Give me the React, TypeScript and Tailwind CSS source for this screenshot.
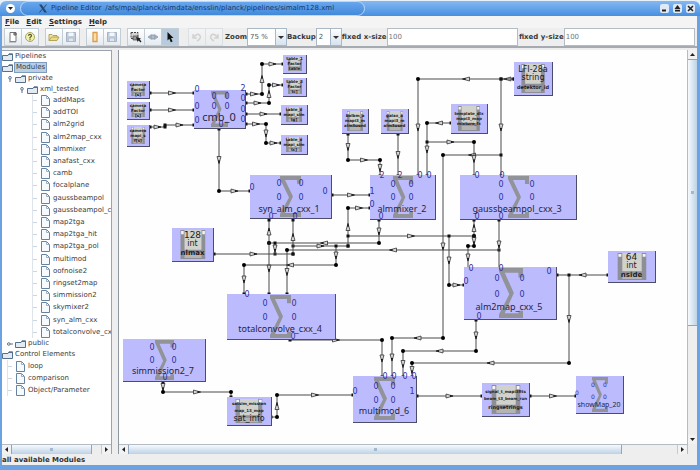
import { useState } from 'react';
import type { ReactNode } from 'react';

type Point = [number, number];

interface Port {
  x: number;
  y: number;
  text?: string;
}

interface ModuleNode {
  name: string;
  x: number;
  y: number;
  w: number;
  h: number;
  sigma: [number, number, number, number];
  label: Point;
  size?: 'small' | 'large';
  ports: Port[];
}

interface DataNode {
  x: number;
  y: number;
  w: number;
  h: number;
  kind: 'tiny' | 'value';
  lines: string[];
}

const ORIGIN = { x: 119, y: 50 };

const fileNames = [
  'addMaps', 'addTOI', 'alm2grid', 'alm2map_cxx', 'almmixer', 'anafast_cxx', 'camb',
  'focalplane', 'gaussbeampol', 'gaussbeampol_c', 'map2tga', 'map2tga_hit', 'map2tga_pol',
  'multimod', 'oofnoise2', 'ringset2map', 'simmission2', 'skymixer2', 'syn_alm_cxx',
  'totalconvolve_cx',
];

const modules: ModuleNode[] = [
  {
    name: 'cmb_0', x: 194, y: 90, w: 52, h: 39, sigma: [211, 91, 17, 36], label: [219, 116], size: 'large',
    ports: [
      { x: 197, y: 90 }, { x: 197, y: 107 }, { x: 197, y: 121 },
      { x: 243, y: 89, text: '2' }, { x: 243, y: 99 }, { x: 243, y: 110 }, { x: 243, y: 120 },
      { x: 214, y: 97 }, { x: 227, y: 97 }, { x: 214, y: 107 }, { x: 227, y: 107 }, { x: 221, y: 125 },
    ],
  },
  {
    name: 'syn_alm_cxx_1', x: 250, y: 175, w: 82, h: 44, sigma: [280, 176, 21, 41], label: [289, 208],
    ports: [
      { x: 252, y: 188 }, { x: 325, y: 192 }, { x: 279, y: 184 }, { x: 301, y: 184 },
      { x: 279, y: 198 }, { x: 301, y: 198 }, { x: 271, y: 217 }, { x: 295, y: 217 },
    ],
  },
  {
    name: 'almmixer_2', x: 370, y: 175, w: 66, h: 45, sigma: [393, 176, 20, 42], label: [402, 208],
    ports: [
      { x: 372, y: 192, text: '1' }, { x: 372, y: 205 }, { x: 382, y: 176, text: '2' },
      { x: 400, y: 176, text: '2' }, { x: 420, y: 176 }, { x: 429, y: 176 }, { x: 393, y: 185 },
      { x: 411, y: 185 }, { x: 393, y: 198 }, { x: 411, y: 198 }, { x: 381, y: 217 },
    ],
  },
  {
    name: 'gaussbeampol_cxx_3', x: 460, y: 175, w: 117, h: 45, sigma: [508, 176, 21, 42], label: [517, 208],
    ports: [
      { x: 477, y: 176 }, { x: 502, y: 176 }, { x: 501, y: 185 }, { x: 532, y: 185 },
      { x: 501, y: 198 }, { x: 532, y: 198 }, { x: 477, y: 217 }, { x: 501, y: 217 },
    ],
  },
  {
    name: 'totalconvolve_cxx_4', x: 227, y: 294, w: 109, h: 46, sigma: [270, 295, 21, 43], label: [280, 328],
    ports: [
      { x: 247, y: 295 }, { x: 265, y: 304 }, { x: 294, y: 304 }, { x: 265, y: 318 },
      { x: 294, y: 318 }, { x: 293, y: 337 },
    ],
  },
  {
    name: 'alm2map_cxx_5', x: 464, y: 267, w: 93, h: 53, sigma: [499, 268, 24, 50], label: [509, 306],
    ports: [
      { x: 471, y: 269 }, { x: 501, y: 269 }, { x: 466, y: 282 }, { x: 549, y: 272 },
      { x: 497, y: 279 }, { x: 522, y: 279 }, { x: 497, y: 295 }, { x: 522, y: 295 }, { x: 479, y: 317 },
    ],
  },
  {
    name: 'simmission2_7', x: 123, y: 339, w: 83, h: 43, sigma: [155, 340, 19, 40], label: [163, 370],
    ports: [
      { x: 152, y: 348 }, { x: 174, y: 348 }, { x: 152, y: 361 }, { x: 174, y: 361 }, { x: 165, y: 378 },
    ],
  },
  {
    name: 'multimod_6', x: 353, y: 376, w: 64, h: 47, sigma: [374, 377, 21, 43], label: [384, 410],
    ports: [
      { x: 355, y: 392 }, { x: 412, y: 392, text: '1' }, { x: 385, y: 377 }, { x: 394, y: 377 },
      { x: 405, y: 377 }, { x: 414, y: 377 }, { x: 376, y: 387 }, { x: 393, y: 387 },
      { x: 376, y: 401 }, { x: 393, y: 401 },
    ],
  },
  {
    name: 'showMap_20', x: 576, y: 376, w: 48, h: 38, sigma: [592, 377, 16, 35], label: [599, 404], size: 'small',
    ports: [
      { x: 577, y: 393 }, { x: 593, y: 385 }, { x: 605, y: 385 }, { x: 593, y: 397 }, { x: 605, y: 397 },
    ],
  },
];

const dataNodes: DataNode[] = [
  { x: 127, y: 81, w: 23, h: 18, kind: 'tiny', lines: ['camera', 'Factor', '[s]'] },
  { x: 127, y: 102, w: 23, h: 18, kind: 'tiny', lines: ['camera', 'Factor', '[s]'] },
  { x: 127, y: 125, w: 23, h: 22, kind: 'tiny', lines: ['camera', 'mapi_s', 'f[s]'] },
  { x: 283, y: 55, w: 24, h: 19, kind: 'tiny', lines: ['table_1', 'Factor', 'table'] },
  { x: 283, y: 78, w: 24, h: 19, kind: 'tiny', lines: ['table_8', 'Factor', 'tc]'] },
  { x: 281, y: 105, w: 27, h: 20, kind: 'tiny', lines: ['table_8', 'mapi_sim', 'tg]'] },
  { x: 281, y: 135, w: 27, h: 20, kind: 'tiny', lines: ['table_6', 'mapi_sim', 'tc]'] },
  { x: 342, y: 109, w: 27, h: 25, kind: 'tiny', lines: ['bolbm_a', 'mapi3_m', 'alm3used'] },
  { x: 381, y: 109, w: 28, h: 25, kind: 'tiny', lines: ['galax_a', 'mapi3_m', 'alm3used'] },
  { x: 451, y: 104, w: 37, h: 30, kind: 'tiny', lines: ['template_dlx', 'mapi3_map', 'mixture_fx'] },
  { x: 514, y: 62, w: 39, h: 34, kind: 'value', lines: ['LFI-28a', 'string', 'detektor_id'] },
  { x: 172, y: 228, w: 42, h: 34, kind: 'value', lines: ['128', 'int', 'nlmax'] },
  { x: 608, y: 251, w: 48, h: 32, kind: 'value', lines: ['64', 'int', 'nside'] },
  { x: 227, y: 397, w: 45, h: 29, kind: 'tiny', lines: ['satsim_mission', 'map_13_map', 'sat_info'] },
  { x: 482, y: 383, w: 48, h: 34, kind: 'tiny', lines: ['signal_t_mapi3fits', 'beam_t3_beam_run', 'ringsetrings'] },
];

const wires: Point[][] = [
  [[150, 93], [194, 93]],
  [[150, 110], [194, 110]],
  [[150, 127], [165, 127]],
  [[165, 125], [194, 125]],
  [[246, 94], [262, 94], [262, 64], [283, 64]],
  [[246, 103], [269, 103], [269, 85], [283, 85]],
  [[246, 114], [281, 114]],
  [[246, 124], [266, 124], [266, 143], [281, 143]],
  [[219, 129], [219, 191], [250, 191]],
  [[332, 195], [370, 195]],
  [[348, 134], [348, 160], [380, 160], [380, 176]],
  [[398, 134], [398, 176]],
  [[514, 79], [501, 79]],
  [[514, 79], [418, 79], [418, 176]],
  [[501, 79], [501, 176]],
  [[501, 155], [443, 155], [443, 338], [392, 338], [392, 377]],
  [[451, 123], [427, 123], [427, 176]],
  [[427, 142], [474, 142], [474, 176]],
  [[348, 246], [348, 208], [370, 208]],
  [[348, 236], [474, 236], [474, 220]],
  [[449, 236], [449, 285], [464, 285]],
  [[474, 236], [474, 246], [468, 246], [468, 269]],
  [[379, 220], [379, 243], [269, 243], [269, 220]],
  [[269, 243], [269, 294]],
  [[275, 243], [275, 254]],
  [[293, 246], [348, 246]],
  [[293, 254], [293, 220]],
  [[336, 246], [336, 265], [244, 265], [244, 294]],
  [[499, 250], [287, 250], [287, 294]],
  [[214, 254], [293, 254]],
  [[499, 220], [499, 269]],
  [[608, 275], [557, 275]],
  [[569, 275], [569, 363], [412, 363], [412, 377]],
  [[476, 320], [476, 351], [403, 351], [403, 377]],
  [[290, 340], [382, 340], [382, 377]],
  [[163, 382], [163, 392], [231, 392], [231, 397]],
  [[271, 417], [277, 417], [277, 395], [353, 395]],
  [[417, 396], [482, 396]],
  [[530, 396], [576, 396]],
];

function Wire({ points }: { points: Point[] }) {
  const segments = points.slice(1).map((end, i) => ({ start: points[i], end }));
  return (
    <g>
      <polyline points={points.map((p) => p.join(',')).join(' ')} fill="none" stroke="#4a4a4a" />
      {segments.map(({ start, end }, i) => {
        const length = Math.abs(end[0] - start[0]) + Math.abs(end[1] - start[1]);
        if (length < 9) return null;
        const angle = (Math.atan2(end[1] - start[1], end[0] - start[0]) * 180) / Math.PI;
        const mx = (start[0] + end[0]) / 2;
        const my = (start[1] + end[1]) / 2;
        return (
          <g key={i} transform={`translate(${mx} ${my}) rotate(${angle})`}>
            <path d="M-3.5 -2L3.5 0L-3.5 2Z" fill="#d8d8d8" stroke="#333" strokeWidth="0.8" />
            <path d="M0.5 -1.1L4 0L0.5 1.1Z" fill="#111" />
          </g>
        );
      })}
      {points.map(([x, y], i) =>
        i > 0 && i < points.length - 1 ? (
          <circle key={i} cx={x} cy={y} r="2" fill="#000" />
        ) : (
          <rect key={i} x={x - 1.5} y={y - 1.5} width="3" height="3" fill="#111" />
        ),
      )}
    </g>
  );
}

function ModuleBox({ node }: { node: ModuleNode }) {
  const [sx, sy, sw, sh] = node.sigma;
  const labelSize =
    node.size === 'large' ? 'text-[11px]' : node.size === 'small' ? 'text-[7px]' : 'text-[9px]';
  const portSize = node.size === 'small' ? 'text-[6px]' : 'text-[8px]';
  return (
    <div
      className="absolute border-r border-b border-[#4c4c6c] bg-[#bbbbfd] leading-none"
      style={{ left: node.x - ORIGIN.x, top: node.y - ORIGIN.y, width: node.w, height: node.h }}
    >
      <svg
        className="absolute"
        style={{ left: sx - node.x, top: sy - node.y, width: sw, height: sh }}
        viewBox="0 0 21 42"
        preserveAspectRatio="none"
      >
        <path
          d="M0 0H21V8H17V4H5L13 21L5 38H17V36H21V42H0V39L9 22L0 3Z"
          fill="#929299"
        />
      </svg>
      {node.ports.map((port, i) => (
        <span
          key={i}
          className={`absolute -translate-x-1/2 -translate-y-1/2 text-[#30309c] ${portSize}`}
          style={{ left: port.x - node.x, top: port.y - node.y }}
        >
          {port.text ?? '0'}
        </span>
      ))}
      <span
        className={`absolute -translate-x-1/2 -translate-y-1/2 font-['Noto_Sans',sans-serif] whitespace-nowrap text-[#26263c] ${labelSize}`}
        style={{ left: node.label[0] - node.x, top: node.label[1] - node.y }}
      >
        {node.name}
      </span>
    </div>
  );
}

function ValueText({ lines }: { lines: string[] }) {
  const [value, type, name] = lines;
  const long = name.length > 6;
  return (
    <>
      <span className={`relative leading-[9px] ${long ? 'text-[8px]' : 'text-[9px]'}`}>{value}</span>
      <span className="relative text-[8px] leading-[8px]">{type}</span>
      <span className={`relative leading-[10px] font-bold ${long ? 'text-[5px]' : 'text-[7px]'}`}>{name}</span>
    </>
  );
}

function TinyText({ lines, wide }: { lines: string[]; wide: boolean }) {
  const [first, second, name] = lines;
  const nameSize = !wide
    ? 'text-[4px] leading-[6px] font-bold'
    : name === 'sat_info'
      ? 'text-[8px] leading-[9px]'
      : 'text-[5px] leading-[10px] font-bold';
  return (
    <>
      <span className={`relative text-[4px] font-bold ${wide ? 'leading-[7px]' : 'leading-[5px]'}`}>{first}</span>
      <span className={`relative text-[4px] font-bold ${wide ? 'leading-[7px]' : 'leading-[5px]'}`}>{second}</span>
      <span className={`relative ${nameSize}`}>{name}</span>
    </>
  );
}

function DataBox({ node }: { node: DataNode }) {
  return (
    <div
      className="absolute flex flex-col items-center justify-center border-r border-b border-[#4c4c6c] bg-[#bbbbfd] leading-none whitespace-nowrap text-[#1c1c1c]"
      style={{ left: node.x - ORIGIN.x, top: node.y - ORIGIN.y, width: node.w, height: node.h }}
    >
      <svg
        className="absolute inset-y-0.5 left-1/2 h-[calc(100%-4px)] w-[62%] -translate-x-1/2"
        viewBox="0 0 30 28"
        preserveAspectRatio="none"
      >
        <path d="M0 0H30V28H0Z" fill="#8e8e96" />
        <path d="M5 0H25V19H5Z" fill="#d2d2cc" />
        <path d="M5 22H25V27H5Z" fill="#b4b4b4" />
        <path d="M1 1H4V4H1ZM26 1H29V4H26Z" fill="#f4f4f4" />
      </svg>
      {node.kind === 'value' ? (
        <ValueText lines={node.lines} />
      ) : (
        <TinyText lines={node.lines} wide={node.w > 40} />
      )}
    </div>
  );
}

function FolderIcon() {
  return (
    <svg className="h-2 w-[11px] shrink-0" viewBox="0 0 11 8">
      <path d="M.5 2.5H6L7 .8H10.5V7.5H.5Z" fill="#e4eaf2" stroke="#56708c" />
      <path d="M7 1.5H10" stroke="#56708c" />
    </svg>
  );
}

function FileIcon() {
  return (
    <svg className="h-[11px] w-[9px] shrink-0" viewBox="0 0 9 11">
      <path d="M.5 .5H5.5L8.5 3.5V10.5H.5Z" fill="#f6fafd" stroke="#67829e" />
      <path d="M5.5 .5V3.5H8.5" fill="none" stroke="#9ab0c6" />
    </svg>
  );
}

function KeyIcon({ open }: { open?: boolean }) {
  return (
    <svg className="h-1.5 w-1.5 shrink-0" viewBox="0 0 6 6">
      <circle cx={open ? 3 : 1.8} cy={open ? 1.8 : 3} r="1.3" fill="#fff" stroke="#58718e" />
      <path d={open ? 'M3 3V6' : 'M3 3H6'} stroke="#58718e" />
    </svg>
  );
}

function FileRow({ name }: { name: string }) {
  return (
    <li className="flex items-center">
      <span className="mr-1 h-px w-1 shrink-0 bg-[#ccd6e0]" />
      <FileIcon />
      <span className="ml-[3px]">{name}</span>
    </li>
  );
}

function ModuleTree() {
  return (
    <nav aria-label="Modules" className="flex-1 overflow-hidden text-[7px] leading-[11px] whitespace-nowrap text-[#3c3c3c]">
      <ul>
        <li className="flex items-center gap-0.5">
          <FolderIcon />
          Pipelines
        </li>
        <li className="flex items-center gap-px">
          <FolderIcon />
          <span className="border border-[#7f9cbc] bg-[#b8cfe5] px-px leading-[9px]">Modules</span>
        </li>
        <li>
          <div className="flex items-center gap-0.5 pl-[5px]">
            <KeyIcon open />
            <FolderIcon />
            <span>private</span>
          </div>
          <div className="flex items-center gap-0.5 pl-[17px]">
            <KeyIcon open />
            <FolderIcon />
            <span>xml_tested</span>
          </div>
          <ul className="ml-[30px] flex h-[243px] flex-col justify-between border-l border-[#dde4ec]">
            {fileNames.map((name) => (
              <FileRow key={name} name={name} />
            ))}
          </ul>
          <div className="flex items-center gap-0.5 pl-[5px]">
            <KeyIcon />
            <FolderIcon />
            <span>public</span>
          </div>
        </li>
        <li>
          <div className="flex items-center gap-0.5">
            <FolderIcon />
            Control Elements
          </div>
          <ul className="ml-[5px] border-l border-[#dde4ec] leading-3">
            {['loop', 'comparison', 'Object/Parameter'].map((name) => (
              <FileRow key={name} name={name} />
            ))}
          </ul>
        </li>
      </ul>
    </nav>
  );
}

function ToolButton({ label, pressed, children }: { label: string; pressed?: boolean; children: ReactNode }) {
  return (
    <button
      type="button"
      aria-label={label}
      className={`-ml-px flex h-[18px] w-[18px] items-center justify-center border border-[#c3cdd6] ${
        pressed ? 'bg-[#b8cbdd]' : 'bg-linear-to-b from-white to-[#e6ebf0]'
      }`}
    >
      <svg className="h-3 w-3" viewBox="0 0 12 12" fill="none">
        {children}
      </svg>
    </button>
  );
}

function SaveGlyph() {
  return (
    <>
      <path d="M1.5 1.5H10.5V10.5H1.5Z" fill="#c2cedd" stroke="#a4b3c5" />
      <path d="M3.5 1.5H8.5V5H3.5Z" fill="#f4f7fa" />
      <path d="M3.5 7H8.5V10.5H3.5Z" fill="#e0e6ed" stroke="#9fb0c2" strokeWidth="0.6" />
    </>
  );
}

function Combo({ id, label, options, className }: { id: string; label: string; options: string[]; className: string }) {
  return (
    <>
      <label htmlFor={id} className="shrink-0 font-bold">
        {label}
      </label>
      <div className="relative h-[18px] shrink-0">
        <select
          id={id}
          className={`h-full appearance-none border border-[#a9b8c6] bg-white pl-0.5 text-[#555] ${className}`}
        >
          {options.map((option) => (
            <option key={option}>{option}</option>
          ))}
        </select>
        <span className="pointer-events-none absolute inset-y-0 right-0 flex w-3 items-center justify-center border border-[#a9b8c6] bg-linear-to-b from-white to-[#d5e2ee]">
          <svg className="h-[3px] w-1.5" viewBox="0 0 6 3">
            <path d="M0 0H6L3 3Z" fill="#333" />
          </svg>
        </span>
      </div>
    </>
  );
}

function Toolbar() {
  const [xSize, setXSize] = useState('100');
  const [ySize, setYSize] = useState('100');
  return (
    <div className="flex h-5 items-center border-b-2 border-[#a5abb1] pr-0.5 pl-[3px] text-[7px] text-[#3a3a3a]">
      <div className="flex pr-[7px]">
        <ToolButton label="New">
          <path d="M3 1.5H9V10.5H3Z" fill="#fff" stroke="#777" />
          <path d="M8 1V5M6 3H10" stroke="#555" />
          <path d="M2 11H9" stroke="#999" />
        </ToolButton>
        <ToolButton label="Help">
          <circle cx="6" cy="6" r="4.5" fill="#f0efb4" stroke="#a8a85c" />
          <path d="M4.5 4.8Q4.6 3.3 6 3.3T7.5 4.7Q7.5 5.5 6 6.4V7.4M6 8.2V9.2" stroke="#55551c" strokeWidth="1.2" />
        </ToolButton>
      </div>
      <div className="flex pr-[7px]">
        <ToolButton label="Open pipeline">
          <path d="M1 9.5V3.5H4L5 4.5H9V6" fill="#f2e6a0" stroke="#b2a45c" />
          <path d="M1 9.5L3.5 6H11L9 9.5Z" fill="#efdc7c" stroke="#b2a45c" />
        </ToolButton>
        <ToolButton label="Save pipeline">
          <SaveGlyph />
        </ToolButton>
      </div>
      <div className="flex pr-[7px]">
        <ToolButton label="Open module">
          <path d="M4 1.5H8V10.5H4Z" fill="#fbe0a8" stroke="#dc9c4c" strokeWidth="1.3" />
        </ToolButton>
        <ToolButton label="Save module">
          <SaveGlyph />
        </ToolButton>
      </div>
      <div className="flex pr-[10px]">
        <ToolButton label="Select area">
          <path d="M1 1.5H8V7.5H1Z" fill="#d4d4d4" stroke="#444" strokeDasharray="2 1" />
          <path d="M3 5H8V9H3Z" fill="#999" stroke="#444" strokeWidth="0.7" />
          <path d="M6 6L11 7.5L9.8 8.6L11.5 10.6L10.6 11.5L8.6 9.6L7.6 11Z" fill="#222" />
        </ToolButton>
        <ToolButton label="Connect">
          <path d="M1 6H11" stroke="#667c90" />
          <path d="M4 3.5L1.5 6L4 8.5M8 3.5L10.5 6L8 8.5" stroke="#92a4b4" />
          <path d="M4 4H8V8H4Z" fill="#aebecd" stroke="#7a8e9f" strokeWidth="0.7" />
        </ToolButton>
        <ToolButton label="Pointer" pressed>
          <path d="M3.5 1L9.5 7H7L8.6 10.4L6.8 11.2L5.3 7.8L3.5 9.4Z" fill="#111" />
        </ToolButton>
      </div>
      <div className="flex pr-0.5 opacity-40">
        <ToolButton label="Undo">
          <path d="M2 3V7H6M2.5 6.5Q6 1.5 9 4.5Q10.5 7.5 6 10" stroke="#aaa" strokeWidth="1.5" />
        </ToolButton>
        <ToolButton label="Redo">
          <path d="M10 3V7H6M9.5 6.5Q6 1.5 3 4.5Q1.5 7.5 6 10" stroke="#aaa" strokeWidth="1.5" />
        </ToolButton>
      </div>
      <Combo id="zoom" label="Zoom" options={['75 %', '100 %', '150 %']} className="w-10" />
      <Combo id="backup" label="Backup" options={['2', '5', '10']} className="w-[26px]" />
      <label htmlFor="x-size" className="shrink-0 font-bold">
        fixed x-size
      </label>
      <input
        id="x-size"
        className="h-[18px] w-0 min-w-0 flex-1 border border-[#b4bcc4] bg-white pl-px text-[#777]"
        value={xSize}
        onChange={(e) => setXSize(e.target.value)}
      />
      <label htmlFor="y-size" className="shrink-0 pl-px font-bold">
        fixed y-size
      </label>
      <input
        id="y-size"
        className="h-[18px] w-0 min-w-0 flex-1 border border-[#b4bcc4] bg-white pl-px text-[#777]"
        value={ySize}
        onChange={(e) => setYSize(e.target.value)}
      />
    </div>
  );
}

function ScrollArrow({ label, d }: { label: string; d: string }) {
  return (
    <button type="button" aria-label={label} className="flex h-[9px] w-[9px] shrink-0 items-center justify-center bg-[#f2f2f2]">
      <svg className="h-[5px] w-[5px]" viewBox="0 0 5 5">
        <path d={d} fill="#222" />
      </svg>
    </button>
  );
}

function HorizontalScroll({ thumb }: { thumb: string }) {
  return (
    <div className="flex h-[10px] shrink-0 border-t border-[#b3bcc5] bg-[#eeeeee]">
      <ScrollArrow label="Scroll left" d="M4 0V5L1 2.5Z" />
      <div className="flex flex-1">
        <div className={`flex items-center justify-center border-x border-[#8fa6bd] bg-linear-to-b from-[#f6fafd] to-[#bdd2e6] ${thumb}`}>
          <span className="h-[3px] w-[3px] bg-[#a3b8cc]" />
        </div>
      </div>
      <div className="border-l border-[#c3cad1]">
        <ScrollArrow label="Scroll right" d="M1 0V5L4 2.5Z" />
      </div>
    </div>
  );
}

function Canvas() {
  return (
    <section aria-label="Pipeline" className="flex min-w-0 flex-1 border-l border-[#8e979f] bg-[#eeeeee]">
      <div className="flex min-w-0 flex-1 flex-col">
        <div className="relative flex-1 overflow-hidden bg-[#fefefe]">
          <svg className="absolute top-0 left-0 h-[395px] w-[568px]" viewBox="119 50 568 395">
            {wires.map((points, i) => (
              <Wire key={i} points={points} />
            ))}
          </svg>
          {modules.map((node) => (
            <ModuleBox key={node.name} node={node} />
          ))}
          {dataNodes.map((node, i) => (
            <DataBox key={i} node={node} />
          ))}
        </div>
        <HorizontalScroll thumb="w-[90%]" />
      </div>
      <div className="flex w-[10px] flex-col border-l border-[#b3bcc5] pb-[10px]">
        <ScrollArrow label="Scroll up" d="M0 4H5L2.5 1Z" />
        <div className="flex-1">
          <div className="flex h-[71%] items-center justify-center border-y border-[#8fa6bd] bg-linear-to-r from-[#f6fafd] to-[#bdd2e6]">
            <span className="h-[3px] w-[3px] bg-[#a3b8cc]" />
          </div>
        </div>
        <ScrollArrow label="Scroll down" d="M0 1H5L2.5 4Z" />
      </div>
    </section>
  );
}

function WindowButton({ label, children }: { label: string; children: ReactNode }) {
  return (
    <button type="button" aria-label={label} className="flex h-[9px] w-[9px] items-center justify-center rounded-xs bg-[#dfeaf6]">
      <svg className="h-[7px] w-[7px]" viewBox="0 0 7 7">
        {children}
      </svg>
    </button>
  );
}

function TitleBar() {
  return (
    <header className="flex h-[15px] items-center rounded-t-md bg-linear-to-b from-[#85b8f2] to-[#468fe0] pr-[5px] pl-1.5">
      <button type="button" aria-label="Window menu" className="flex h-[9px] w-[9px] items-center justify-center rounded-full bg-white">
        <svg className="h-[3px] w-[5px]" viewBox="0 0 5 3">
          <path d="M0 0H5L2.5 3Z" fill="#222" />
        </svg>
      </button>
      <div className="ml-[5px] flex h-[15px] w-[50%] items-center rounded-full border border-[#b9d9fa] bg-linear-to-b from-[#68a6ee] to-[#4389da] pl-[18px] text-[7px] whitespace-nowrap text-[#173a66]">
        <svg className="mr-[4px] h-[9px] w-[8px] shrink-0" viewBox="0 0 8 9">
          <path d="M0 .5H2.6L8 8.5H5.4Z" fill="#27486f" />
          <path d="M7.5 .5L4.6 4M3.2 5.2L.5 8.5" stroke="#27486f" />
        </svg>
        <h1>Pipeline Editor</h1>
        <span className="ml-1">/afs/mpa/planck/simdata/ensslin/planck/pipelines/simalm128.xml</span>
      </div>
      <div className="ml-auto flex gap-1">
        <WindowButton label="Minimize">
          <path d="M1 4.5H5V6.5H1Z" fill="#222" />
        </WindowButton>
        <WindowButton label="Maximize">
          <path d="M3.5 0L6.5 4H.5ZM1 4.8H6V6.4H1Z" fill="#222" />
        </WindowButton>
        <WindowButton label="Close">
          <path d="M1 1L6 6M6 1L1 6" stroke="#222" strokeWidth="1.6" />
        </WindowButton>
      </div>
    </header>
  );
}

function MenuItem({ name }: { name: string }) {
  return (
    <button type="button">
      <span className="underline">{name[0]}</span>
      {name.slice(1)}
    </button>
  );
}

export default function App() {
  return (
    <div className="flex min-h-screen flex-col bg-[#e8f0f8] pt-px font-['DejaVu_Sans',sans-serif]">
      <TitleBar />
      <div className="flex flex-1 flex-col border-r-[3px] border-b-[5px] border-l-2 border-[#6ba3e2] bg-[#eeeeee]">
        <div className="flex h-3 items-center gap-[7px] bg-[#f4f4f4] pl-[3px] text-[7px] leading-none font-bold text-[#2c2c2c]">
          {['File', 'Edit', 'Settings', 'Help'].map((name) => (
            <MenuItem key={name} name={name} />
          ))}
        </div>
        <Toolbar />
        <main className="flex flex-1 gap-[6px] pt-0.5">
          <aside className="flex w-[110px] shrink-0 flex-col border-t border-r border-[#9aa4ae] bg-white">
            <ModuleTree />
            <HorizontalScroll thumb="w-[90%]" />
          </aside>
          <Canvas />
        </main>
        <footer className="h-[11px] text-[7px] leading-[12px] font-bold text-[#333]">all available Modules</footer>
      </div>
    </div>
  );
}
